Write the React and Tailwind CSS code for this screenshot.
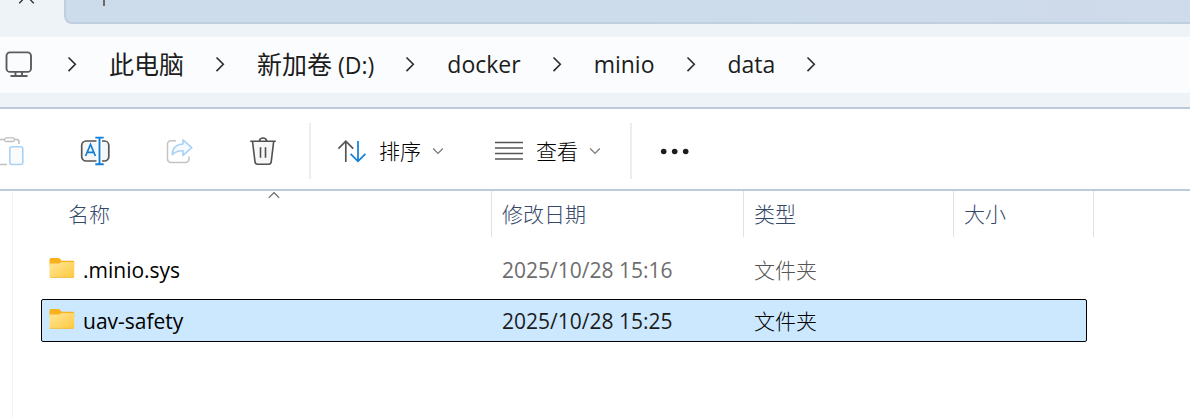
const crumbs = [
  { name: '此电脑', cjk: true },
  { name: '新加卷', suffix: '(D:)', cjk: true },
  { name: 'docker' },
  { name: 'minio' },
  { name: 'data' },
];

const folders = [
  { name: '.minio.sys', date: '2025/10/28 15:16', type: '文件夹', selected: false },
  { name: 'uav-safety', date: '2025/10/28 15:25', type: '文件夹', selected: true },
];

function Chevron() {
  return (
    <svg className="h-4 w-[10px] shrink-0" viewBox="0 0 10 16" fill="none" stroke="#2b2b2b" strokeWidth="1.6" aria-hidden="true">
      <path d="M1.5 1.5 8.3 8.3 1.5 15.1" />
    </svg>
  );
}

function ComputerIcon() {
  return (
    <svg className="h-7 w-7" viewBox="0 0 28 28" fill="none" stroke="#5c5c5c" strokeWidth="1.9" aria-hidden="true">
      <rect x="1.5" y="2.4" width="24.5" height="19.5" rx="3.5" />
      <path d="M10.500 22v4M17 22v4M5.500 26h17" />
    </svg>
  );
}

function PasteIcon() {
  return (
    <svg className="h-8 w-[30px]" viewBox="0 0 30 32" fill="none" aria-hidden="true">
      <path d="M8 4.5H3.500A2.500 2.500 0 0 0 1 7v20a2.500 2.500 0 0 0 2.500 2.500H11M18 4.500h2.500A2.500 2.500 0 0 1 23 7v2" stroke="#bfbfbf" strokeWidth="1.500" />
      <rect x="8.500" y="2.800" width="10" height="3.700" rx="1.850" stroke="#bfbfbf" strokeWidth="1.300" />
      <rect x="13.800" y="11.700" width="13" height="17.800" rx="2" fill="#f9fbfd" stroke="#a9d3f5" strokeWidth="1.600" />
    </svg>
  );
}

function RenameIcon() {
  return (
    <svg className="h-8 w-[30px]" viewBox="0 0 30 32" fill="none" aria-hidden="true">
      <path d="M16.500 6H6a4.300 4.300 0 0 0-4.300 4.300v11.400A4.300 4.300 0 0 0 6 26h10.500M22 6h2.500a4.300 4.300 0 0 1 4.300 4.300v11.400a4.300 4.300 0 0 1-4.300 4.300H22" fill="#f6f6f6" stroke="#555" strokeWidth="1.700" />
      <path d="M5.600 21 10.500 9.500 15.400 21M7.300 17.400h6.400" stroke="#0f7fd8" strokeWidth="1.700" />
      <path d="M15.300 2.600h8.400M15.300 29.200h8.400M19.500 2.600v26.600" stroke="#0f7fd8" strokeWidth="1.900" />
    </svg>
  );
}

function ShareIcon() {
  return (
    <svg className="h-8 w-[30px]" viewBox="0 0 30 32" fill="none" aria-hidden="true">
      <path d="M12 5.800H7A3.500 3.500 0 0 0 3.500 9.300v14.700A3.500 3.500 0 0 0 7 27.500h14.500a3.500 3.500 0 0 0 3.500-3.500v-2.500" stroke="#c3c3c3" strokeWidth="1.500" />
      <path d="M19 4.800 27.800 12.700 19 20.400v-4.600c-4.400-.4-7.600 1-10.800 3.800C8.400 13.400 12.200 9.400 19 9z" fill="#f6faff" stroke="#a9d3f5" strokeWidth="1.600" strokeLinejoin="round" />
    </svg>
  );
}

function TrashIcon() {
  return (
    <svg className="h-8 w-[30px]" viewBox="0 0 30 32" fill="none" stroke="#505050" strokeWidth="1.600" aria-hidden="true">
      <path d="M4.500 6.300 7 26.900a2.600 2.600 0 0 0 2.600 2.300h11a2.600 2.600 0 0 0 2.600-2.300l2.500-20.600" fill="#f7f7f7" />
      <path d="M2.200 6.300h25.600M11.200 6a3.900 3.900 0 0 1 7.600 0M12.500 12.300v10.400M17.500 12.300v10.400" />
    </svg>
  );
}

function SortIcon() {
  return (
    <svg className="h-6 w-[30px]" viewBox="0 0 30 24" fill="none" strokeWidth="1.700" aria-hidden="true">
      <path d="M8.800 23V2.200M1.400 9.600 8.800 2.200l7.400 7.400" stroke="#555" />
      <path d="M21 2v20.300M13.600 14.900 21 22.300l7.400-7.400" stroke="#0f7fd8" />
    </svg>
  );
}

function ListIcon() {
  return (
    <svg className="h-6 w-[30px]" viewBox="0 0 30 24" fill="none" stroke="#555" strokeWidth="1.500" aria-hidden="true">
      <path d="M1 3.500h28M1 9h28M1 14.500h28M1 20h28" />
    </svg>
  );
}

function DownIcon() {
  return (
    <svg className="h-2 w-3" viewBox="0 0 12 8" fill="none" stroke="#777" strokeWidth="1.200" aria-hidden="true">
      <path d="M1.200 1.500 6 6.300l4.800-4.800" />
    </svg>
  );
}

function FolderIcon() {
  return (
    <svg className="mb-1 h-5 w-[26px] shrink-0" viewBox="0 0 26 20" aria-hidden="true">
      <defs>
        <linearGradient id="folder" x1="0" y1="0" x2="1" y2="1">
          <stop offset="0" stopColor="#ffe69c" />
          <stop offset="1" stopColor="#ffc93c" />
        </linearGradient>
      </defs>
      <path d="M.5 1.500A1.500 1.500 0 0 1 2 0h7.300c.8 0 1.300.3 1.700.8L12.500 2.700H24a1.200 1.200 0 0 1 1.200 1.200V8H.5z" fill="#f9b11b" />
      <path d="M.5 5.600h9.300c.7 0 1.200-.3 1.700-.8.400-.5.900-.9 1.600-.9h12.100v14.700a1.100 1.100 0 0 1-1.100 1.100H1.600a1.100 1.100 0 0 1-1.100-1.100z" fill="url(#folder)" />
      <path d="M.9 19.400h23.900" stroke="#efb63a" strokeWidth=".7" />
    </svg>
  );
}

function TabStrip() {
  return (
    <div className="flex h-6 overflow-hidden">
      <button type="button" aria-label="关闭" className="flex h-6 w-16 shrink-0 items-start pl-[18px]">
        <svg className="h-1 w-[17px]" viewBox="0 0 17 4" fill="none" stroke="#333" strokeWidth="1.400">
          <path d="M1.200 3.300 4.700-.2M15.800 3.300 12.300-.2" />
        </svg>
      </button>
      <div className="flex flex-1 rounded-bl-lg border-b-2 border-l-2 border-[#bfcfe0] bg-linear-to-r from-[#ccdcea] via-[#ccdcea] to-[#cfdaeb]">
        <button type="button" aria-label="新建标签页" className="ml-7 flex w-5 items-start justify-center">
          <svg className="h-[6px] w-[2px]" viewBox="0 0 2 6">
            <path d="M1 0v6" stroke="#444" strokeWidth="1.500" />
          </svg>
        </button>
      </div>
    </div>
  );
}

function AddressBar() {
  return (
    <nav aria-label="路径" className="mt-[13px] flex h-14 items-center bg-[#fbfcfe] pb-[2px] pl-[5px] whitespace-nowrap">
      <ComputerIcon />
      <div className="ml-[34px] flex items-center gap-8 text-[#1c1c1c]">
        <Chevron />
        {crumbs.map((c) => (
          <div key={c.name} className="flex items-center gap-[31px]">
            <a href="#" className={c.cjk ? 'text-[25px] leading-8' : 'text-[23px] leading-8'}>
              {c.name}
              {c.suffix && <span className="text-[23px]"> {c.suffix}</span>}
            </a>
            <Chevron />
          </div>
        ))}
      </div>
    </nav>
  );
}

function Divider() {
  return <div className="h-14 w-[2px] shrink-0 bg-[#ededed]" />;
}

function Toolbar() {
  return (
    <div role="toolbar" className="mt-[14px] flex h-[84px] items-center overflow-hidden border-y-2 border-[#bccada] bg-white pt-1 text-[21px] leading-8 font-light whitespace-nowrap text-black">
      <div className="-ml-1 flex gap-[54px]">
        <button type="button" aria-label="粘贴" disabled><PasteIcon /></button>
        <button type="button" aria-label="重命名"><RenameIcon /></button>
        <button type="button" aria-label="共享" disabled><ShareIcon /></button>
        <button type="button" aria-label="删除"><TrashIcon /></button>
      </div>
      <div className="ml-[31px] flex items-center">
        <Divider />
        <button type="button" className="ml-[26px] flex items-center">
          <SortIcon />
          <span className="ml-3">排序</span>
          <span className="ml-[11px]"><DownIcon /></span>
        </button>
        <button type="button" className="ml-[50px] flex items-center">
          <ListIcon />
          <span className="ml-3">查看</span>
          <span className="ml-[11px]"><DownIcon /></span>
        </button>
        <span className="ml-[29px]"><Divider /></span>
        <button type="button" aria-label="更多" className="ml-7">
          <svg className="h-6 w-[30px]" viewBox="0 0 30 24" fill="#1c1c1c">
            <circle cx="3.700" cy="12.500" r="2.800" />
            <circle cx="14.700" cy="12.500" r="2.800" />
            <circle cx="25.700" cy="12.500" r="2.800" />
          </svg>
        </button>
      </div>
    </div>
  );
}

const headCell = 'border-r border-[#e2e2e2] pt-[7px] pl-[10px] text-left font-light';

function FileTable() {
  return (
    <table className="ml-7 block text-[21px] leading-8 whitespace-nowrap">
      <thead className="block">
        <tr className="grid h-[46px] w-[1053px] grid-cols-[451px_252px_210px_140px] text-[#34496a]">
          <th scope="col" aria-sort="ascending" className="relative border-r border-[#e2e2e2] pt-[7px] pl-[27px] text-left font-light">
            名称
            <svg className="absolute top-0 left-[227px] h-2 w-3" viewBox="0 0 12 8" fill="none" stroke="#666" strokeWidth="1.200">
              <path d="M.8 6.800 6 1.600l5.200 5.200" />
            </svg>
          </th>
          <th scope="col" className={headCell}>修改日期</th>
          <th scope="col" className={headCell}>类型</th>
          <th scope="col" className={headCell}>大小</th>
        </tr>
      </thead>
      <tbody className="flex flex-col gap-2 pt-[11px]">
        {folders.map((f) => (
          <tr
            key={f.name}
            aria-selected={f.selected}
            className={`grid h-[43px] w-[1046px] grid-cols-[450px_252px_210px_1fr] items-center rounded-xs border ${
              f.selected ? 'border-black bg-[#cce8ff] text-[#1c1c1c]' : 'border-transparent text-[#6d6d6d]'
            }`}
          >
            <td className="flex items-center pl-[7px] text-black">
              <FolderIcon />
              <span className="ml-2">{f.name}</span>
            </td>
            <td className="pl-[10px]">{f.date}</td>
            <td className={f.selected ? 'pl-[10px] font-light text-black' : 'pl-[10px] font-light text-[#555]'}>{f.type}</td>
            <td />
          </tr>
        ))}
      </tbody>
    </table>
  );
}

export default function App() {
  return (
    <div className="flex min-h-screen flex-col overflow-x-hidden bg-[#eef3f8] font-['Open_Sans','Noto_Sans_CJK_SC',sans-serif]">
      <TabStrip />
      <AddressBar />
      <Toolbar />
      <main className="flex flex-1 bg-white">
        <div className="w-[13px] shrink-0 border-r border-[#f3f3f3]" />
        <FileTable />
      </main>
    </div>
  );
}
